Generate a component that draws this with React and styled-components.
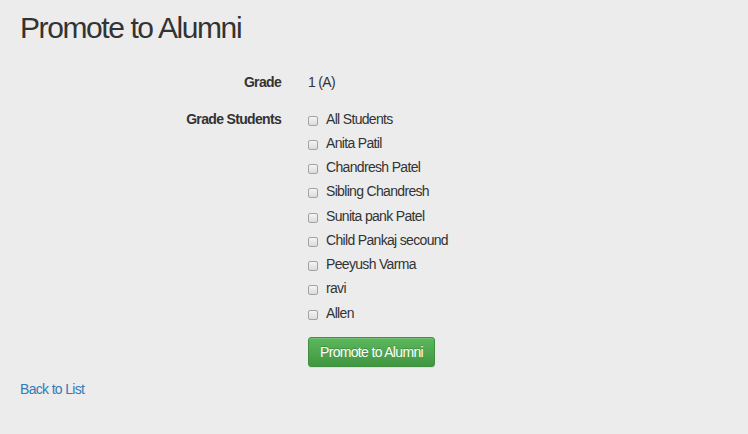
import styled, { createGlobalStyle } from "styled-components";

const students = [
    "All Students",
    "Anita Patil",
    "Chandresh Patel",
    "Sibling Chandresh",
    "Sunita pank Patel",
    "Child Pankaj secound",
    "Peeyush Varma",
    "ravi",
    "Allen",
];

function App() {
    return (
        <>
            <GlobalStyle />
            <Page>
                <Title>Promote to Alumni</Title>
                <Form>
                    <Row>
                        <Label>Grade</Label>
                        <Value>1 (A)</Value>
                    </Row>
                    <Row>
                        <Label>Grade Students</Label>
                        <div>
                            <List>
                                {students.map((name) => (
                                    <Check key={name}>
                                        <Box type="checkbox" />
                                        <span>{name}</span>
                                    </Check>
                                ))}
                            </List>
                            <Button type="button">Promote to Alumni</Button>
                        </div>
                    </Row>
                </Form>
                <BackLink href="#">Back to List</BackLink>
            </Page>
        </>
    );
}

const GlobalStyle = createGlobalStyle`
    html, body {
        margin: 0;
        padding: 0;
        background: #ececec;
    }
    body {
        font-family: "Liberation Sans", Arial, sans-serif;
        font-size: 14px;
        line-height: 20px;
        letter-spacing: -0.048em;
        color: #333333;
    }
`

const Page = styled.div`
    padding: 11px 20px 20px;
    min-height: 434px;
    box-sizing: border-box;
`

const Title = styled.h2`
    margin: 0;
    font-size: 30px;
    font-weight: 400;
    line-height: 33px;
    letter-spacing: -0.047em;
    color: #333333;
`

const Form = styled.div`
    margin-top: 27.5px;
    display: flex;
    flex-direction: column;
    gap: 17px;
`

const Row = styled.div`
    display: grid;
    grid-template-columns: 261px 1fr;
    column-gap: 27px;
`

const Label = styled.div`
    text-align: right;
    font-weight: 700;
`

const Value = styled.div``

const List = styled.div`
    display: flex;
    flex-direction: column;
    gap: 4.25px;
`

const Check = styled.label`
    display: flex;
    align-items: flex-start;
    gap: 8px;
    height: 20px;
`

const Box = styled.input`
    appearance: none;
    margin: 7px 0 0;
    width: 10px;
    height: 10px;
    border: 1px solid #a3a3a3;
    border-radius: 2px;
    background: linear-gradient(#f4f4f4, #dcdcdc);
    box-sizing: border-box;
`

const Button = styled.button`
    margin-top: 14.5px;
    height: 30px;
    padding: 0 11px;
    font-family: "Liberation Sans", Arial, sans-serif;
    font-size: 14px;
    letter-spacing: -0.048em;
    color: #ffffff;
    border: 1px solid #3e8f3e;
    border-radius: 3px;
    background: linear-gradient(#5cb85c, #419641);
    box-shadow: inset 0 1px 0 rgba(255, 255, 255, 0.15), 0 1px 1px rgba(0, 0, 0, 0.075);
    text-shadow: 0 -1px 0 rgba(0, 0, 0, 0.2);
`

const BackLink = styled.a`
    display: inline-block;
    margin-top: 11.5px;
    color: #337ab7;
    text-decoration: none;
`

export default App;
